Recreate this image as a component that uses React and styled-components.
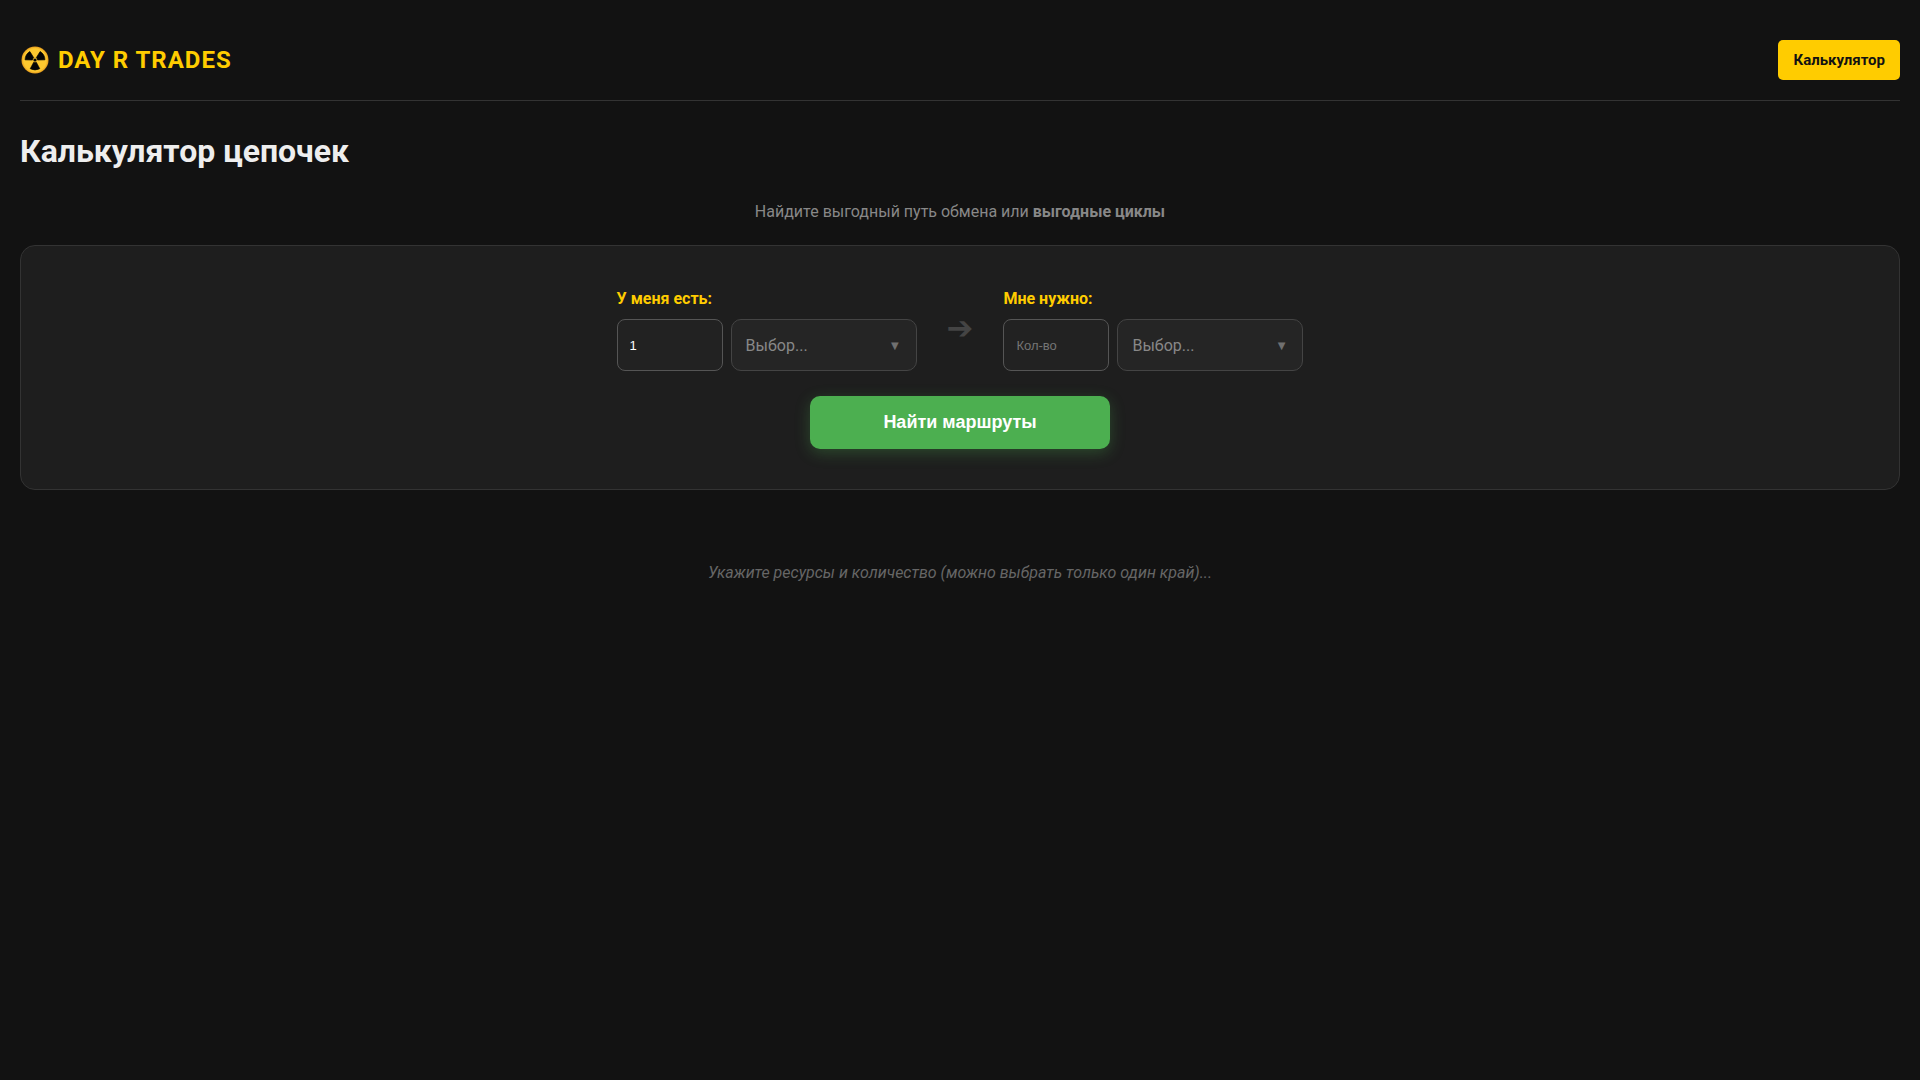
import React, { useState } from "react";
import styled, { createGlobalStyle } from "styled-components";

const GlobalStyle = createGlobalStyle`
  *, *::before, *::after { box-sizing: border-box; }
  body {
    margin: 0;
    background: #121212;
    color: #eee;
    font-family: Roboto, "Noto Sans", sans-serif;
    font-size: 16px;
    line-height: 25px;
  }
`;

const Page = styled.div`
  padding: 20px;
`;

const Header = styled.header`
  display: flex;
  align-items: center;
  justify-content: space-between;
  padding: 20px 0;
  border-bottom: 1px solid #333;
`;

const Brand = styled.a`
  display: flex;
  align-items: center;
  gap: 8px;
  color: #ffcc00;
  font-size: 24px;
  font-weight: 700;
  line-height: 38px;
  letter-spacing: 1px;
  text-decoration: none;
  text-transform: uppercase;
`;

const BrandMark = styled.svg`
  width: 30px;
  height: 30px;
`;

const Nav = styled.nav`
  display: flex;
  gap: 10px;
`;

const NavLink = styled.a`
  padding: 8px 15px;
  border-radius: 5px;
  background: #ffcc00;
  color: #121212;
  font-size: 15px;
  font-weight: 700;
  line-height: 24px;
  text-decoration: none;
`;

const Title = styled.h1`
  margin: 24px 0 22px;
  font-size: 32px;
  font-weight: 700;
  line-height: 52px;
`;

const Lead = styled.p`
  margin: 0 0 21px;
  color: #888;
  text-align: center;
`;

const Card = styled.form`
  display: flex;
  flex-direction: column;
  align-items: center;
  gap: 25px;
  padding: 40px;
  border: 1px solid #333;
  border-radius: 15px;
  background: #1e1e1e;
`;

const Exchange = styled.div`
  display: flex;
  flex-wrap: wrap;
  align-items: center;
  justify-content: center;
  gap: 30px;
`;

const Side = styled.div`
  display: flex;
  flex-direction: column;
  gap: 8px;
  width: 300px;
`;

const Label = styled.label`
  color: #ffcc00;
  font-weight: 700;
`;

const Fields = styled.div`
  display: flex;
  gap: 8px;
  height: 52px;
`;

const Amount = styled.input`
  width: 106px;
  padding: 0 12px;
  border: 1px solid #555;
  border-radius: 8px;
  background: #222;
  color: #fff;
  font-family: "Liberation Sans", Arial, sans-serif;
  font-size: 13px;
  appearance: textfield;
  &::placeholder { color: #757575; opacity: 1; }
`;

const SelectBox = styled.div`
  display: grid;
  flex: 1;
  align-items: center;
  & > * { grid-area: 1 / 1; }
`;

const Select = styled.select`
  width: 100%;
  height: 100%;
  padding: 0 40px 0 14px;
  border: 1px solid #444;
  border-radius: 10px;
  background: #252525;
  color: #888;
  font: inherit;
  appearance: none;
`;

const Caret = styled.span`
  justify-self: end;
  padding-right: 18px;
  color: #707070;
  font-family: "DejaVu Sans", sans-serif;
  font-size: 10px;
  pointer-events: none;
`;

const Arrow = styled.span`
  color: #444;
  font-family: "DejaVu Sans", sans-serif;
  font-size: 32px;
`;

const Submit = styled.button`
  width: 300px;
  padding: 16px;
  border: 0;
  border-radius: 10px;
  background: #4caf50;
  box-shadow: 0 4px 15px rgba(76, 175, 80, 0.3);
  color: #fff;
  font-family: "Liberation Sans", Arial, sans-serif;
  font-size: 18px;
  font-weight: 700;
  line-height: 21px;
  cursor: pointer;
`;

const Hint = styled.p`
  margin: 0;
  padding: 70px 0;
  color: #666;
  font-style: italic;
  text-align: center;
`;

function Radiation() {
  return (
    <BrandMark viewBox="0 0 30 30" aria-hidden="true">
      <defs>
        <radialGradient id="disc" cx="0.5" cy="0.5" r="0.5">
          <stop offset="0.84" stopColor="#fdc82f" />
          <stop offset="1" stopColor="#e59a1c" />
        </radialGradient>
      </defs>
      <circle cx="15" cy="15" r="13.5" fill="url(#disc)" />
      {[0, 120, 240].map((turn) => (
        <path
          key={turn}
          transform={`rotate(${turn} 15 15)`}
          d="M13.7 17.2 L10.2 23.7 Q15 26.3 19.8 23.7 L16.3 17.2 Q15 17.9 13.7 17.2 Z"
          fill="#050505"
          stroke="#050505"
          strokeWidth="0.6"
          strokeLinejoin="round"
        />
      ))}
      <circle cx="15" cy="15" r="1.6" fill="#050505" />
    </BrandMark>
  );
}

function ResourceSide({ id, label, initial }) {
  const [amount, setAmount] = useState(initial);
  return (
    <Side>
      <Label htmlFor={id}>{label}</Label>
      <Fields>
        <Amount
          id={id}
          type="number"
          placeholder="Кол-во"
          value={amount}
          onChange={(e) => setAmount(e.target.value)}
        />
        <SelectBox>
          <Select aria-label={label} defaultValue="">
            <option value="">Выбор...</option>
          </Select>
          <Caret aria-hidden="true">▼</Caret>
        </SelectBox>
      </Fields>
    </Side>
  );
}

export default function App() {
  return (
    <Page>
      <GlobalStyle />
      <Header>
        <Brand href="#">
          <Radiation />
          Day R Trades
        </Brand>
        <Nav>
          <NavLink href="#calculator">Калькулятор</NavLink>
        </Nav>
      </Header>
      <main id="calculator">
        <Title>Калькулятор цепочек</Title>
        <Lead>
          Найдите выгодный путь обмена или <strong>выгодные циклы</strong>
        </Lead>
        <Card onSubmit={(e) => e.preventDefault()}>
          <Exchange>
            <ResourceSide id="have" label="У меня есть:" initial="1" />
            <Arrow aria-hidden="true">➔</Arrow>
            <ResourceSide id="need" label="Мне нужно:" initial="" />
          </Exchange>
          <Submit type="submit">Найти маршруты</Submit>
        </Card>
        <Hint>Укажите ресурсы и количество (можно выбрать только один край)...</Hint>
      </main>
    </Page>
  );
}
